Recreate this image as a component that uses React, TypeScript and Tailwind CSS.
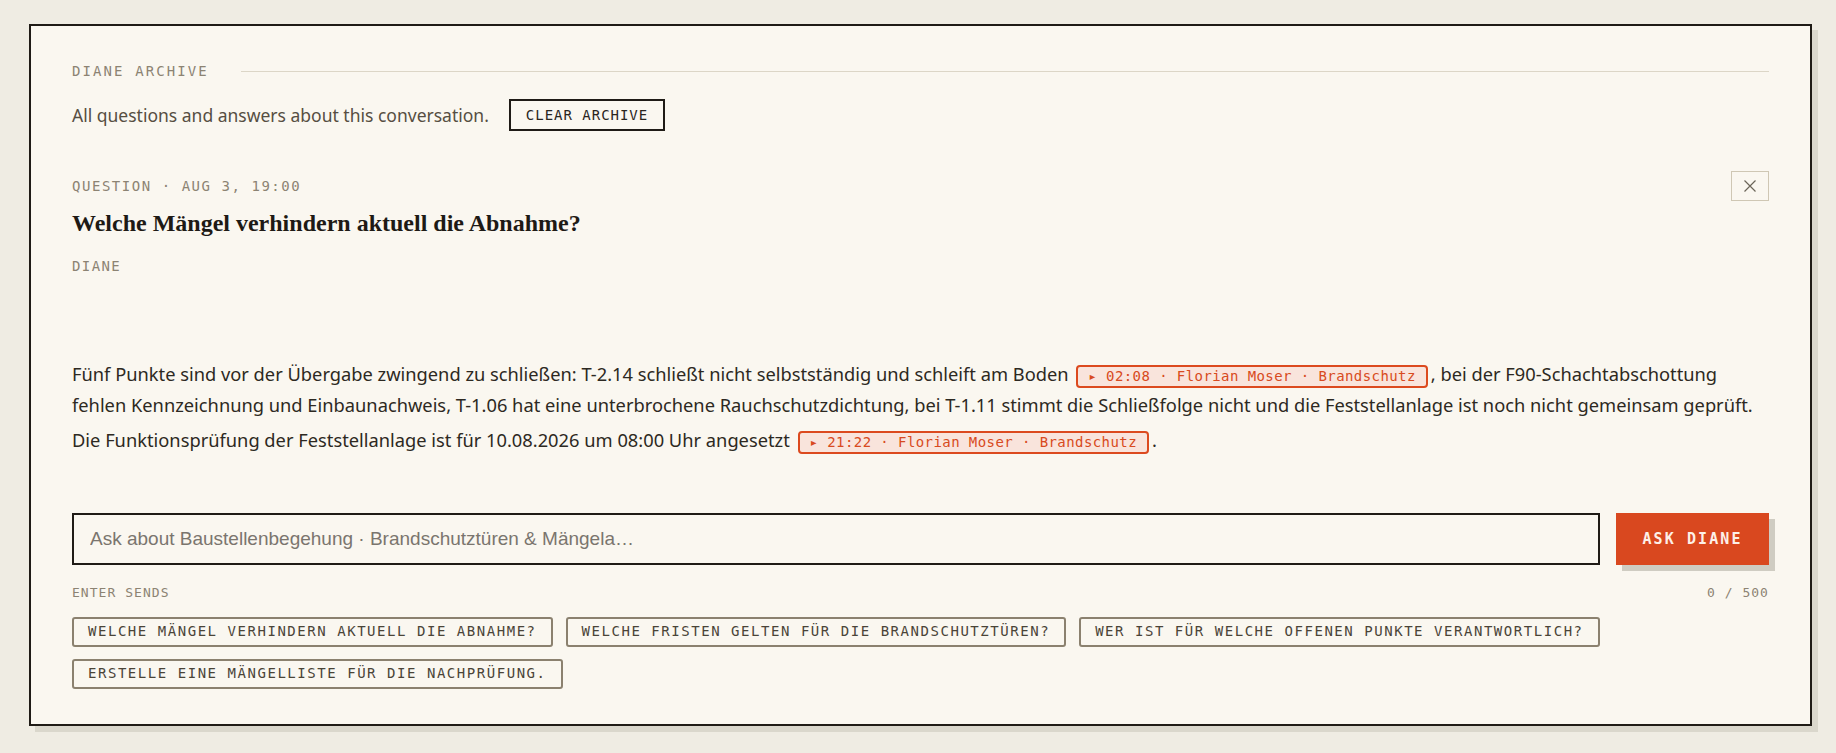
import React from "react";

const mono = "font-['DejaVu_Sans_Mono',monospace]";
const sans = "font-['Noto_Sans',sans-serif]";

const suggestions = [
  "Welche Mängel verhindern aktuell die Abnahme?",
  "Welche Fristen gelten für die Brandschutztüren?",
  "Wer ist für welche offenen Punkte verantwortlich?",
  "Erstelle eine Mängelliste für die Nachprüfung.",
];

// inline citation pointing into the recording
const Cite = ({ time, who, topic }: { time: string; who: string; topic: string }) => (
  <span
    className={`${mono} mx-[3px] inline-flex h-[23px] items-center rounded-[4px] border-2 border-[#dc4a1f] bg-[#f9e4dc] px-[10px] align-middle text-[14px] leading-[19px] tracking-[0.03em] text-[#d84a20]`}
  >
    ▸ {time} · {who} · {topic}
  </span>
);

export default function App() {
  return (
    <div className="min-h-screen bg-[#efece3] pt-[24px] pb-[27px] pl-[29px] pr-[24px]">
      <section className="border-2 border-[#1f1b16] bg-[#faf7f0] px-[41px] pt-[36px] pb-[35px] shadow-[6px_6px_0_#dad7cc]">
        {/* archive header */}
        <div className="flex h-[18px] items-center gap-8">
          <span className={`${mono} text-[14px] leading-[18px] tracking-[0.15em] text-[#8c8373]`}>
            DIANE ARCHIVE
          </span>
          <div className="h-px flex-1 bg-[#dcd6c7]" />
        </div>

        <div className="mt-[19px] flex h-[32px] items-center gap-5">
          <p className={`${sans} text-[17.5px] text-[#564e42]`}>
            All questions and answers about this conversation.
          </p>
          <button
            className={`${mono} h-[32px] border-2 border-[#1f1b16] px-[15px] text-[14px] tracking-[0.07em] text-[#2a251e]`}
          >
            CLEAR ARCHIVE
          </button>
        </div>

        {/* question entry */}
        <div className="mt-[40px] flex h-[30px] items-center justify-between">
          <span className={`${mono} text-[14px] leading-[18px] tracking-[0.11em] text-[#8c8373]`}>
            QUESTION · AUG 3, 19:00
          </span>
          <button className="flex h-[30px] w-[38px] items-center justify-center border border-[#cfc7b4]">
            <svg width="12" height="12" viewBox="0 0 12 12" fill="none">
              <path d="M0.5 0.5L11.5 11.5M11.5 0.5L0.5 11.5" stroke="#6b6558" strokeWidth="1.2" />
            </svg>
          </button>
        </div>

        <h2 className="mt-[6px] font-['Liberation_Serif',serif] text-[24px] leading-[32px] font-bold text-[#1e1a15]">
          Welche Mängel verhindern aktuell die Abnahme?
        </h2>

        <div className={`${mono} mt-[18px] text-[14px] leading-[18px] tracking-[0.1em] text-[#8c8373]`}>
          DIANE
        </div>

        {/* answer */}
        <div className={`${sans} mt-[84px] text-[18.3px] leading-[30.6px] text-[#2d2922]`}>
          <p>
            Fünf Punkte sind vor der Übergabe zwingend zu schließen: T-2.14 schließt nicht selbstständig und
            schleift am Boden <Cite time="02:08" who="Florian Moser" topic="Brandschutz" />, bei der
            F90-Schachtabschottung fehlen Kennzeichnung und Einbaunachweis, T-1.06 hat eine unterbrochene
            Rauchschutzdichtung, bei T-1.11 stimmt die Schließfolge nicht und die Feststellanlage ist noch nicht
            gemeinsam geprüft.
          </p>
          <p className="mt-[5px]">
            Die Funktionsprüfung der Feststellanlage ist für 10.08.2026 um 08:00 Uhr angesetzt{" "}
            <Cite time="21:22" who="Florian Moser" topic="Brandschutz" />.
          </p>
        </div>

        {/* ask box */}
        <div className="mt-[57px] flex gap-4">
          <input
            className="h-[52px] flex-1 border-2 border-[#1f1b16] bg-[#faf7f0] px-[16px] font-['Liberation_Sans',sans-serif] text-[19px] text-[#2d2922] outline-none placeholder:text-[#7a756e]"
            placeholder="Ask about Baustellenbegehung · Brandschutztüren & Mängela…"
          />
          <button
            className={`${mono} h-[52px] w-[153px] bg-[#d9481f] text-[15px] font-bold tracking-[0.14em] text-[#fdf0e8] shadow-[6px_6px_0_#cfccc2]`}
          >
            ASK DIANE
          </button>
        </div>

        <div
          className={`${mono} mt-[20px] flex justify-between text-[13px] leading-[16px] tracking-[0.08em] text-[#8c8373]`}
        >
          <span>ENTER SENDS</span>
          <span>0 / 500</span>
        </div>

        <div className="mt-[16px] flex flex-wrap gap-x-[13px] gap-y-[12px]">
          {suggestions.map((s) => (
            <button
              key={s}
              className={`${mono} flex h-[30px] items-center rounded-[3px] border-2 border-[#8b816f] px-[14px] text-[14px] tracking-[0.11em] text-[#4a4438] uppercase`}
            >
              {s}
            </button>
          ))}
        </div>
      </section>
    </div>
  );
}
